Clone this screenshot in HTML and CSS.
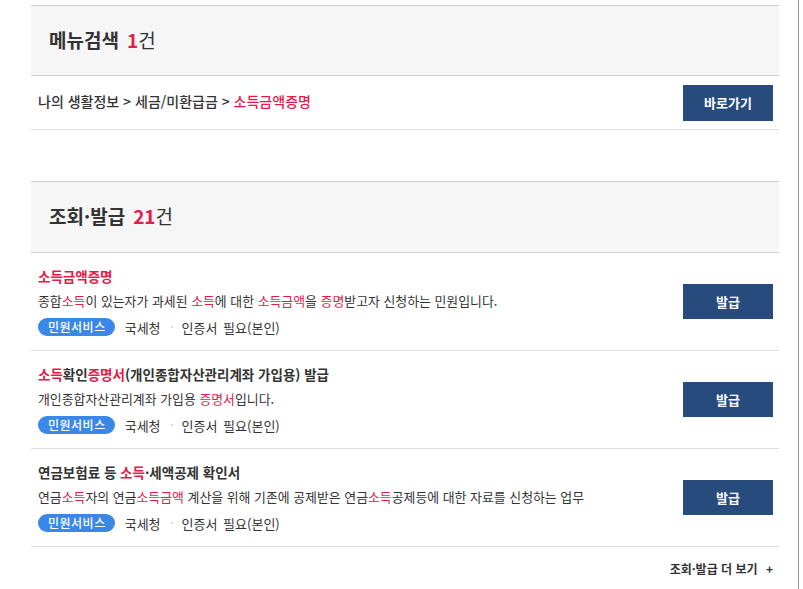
FILE: index.html
```html
<!DOCTYPE html>
<html lang="ko">
<head>
<meta charset="utf-8">
<link rel="stylesheet" href="styles.css">
</head>
<body>
<div class="frame">
  <div class="content">
    <section class="group first">
      <h2 class="group-head">메뉴검색 <span class="count">1</span><span class="unit">건</span></h2>
      <div class="crumb-row">
        <p class="crumb">나의 생활정보 &gt; 세금/미환급금 &gt; <em>소득금액증명</em></p>
        <a class="btn btn-go">바로가기</a>
      </div>
    </section>

    <section class="group second">
      <h2 class="group-head">조회·발급 <span class="count">21</span><span class="unit">건</span></h2>
      <ul class="items">
        <li class="item">
          <div class="info">
            <p class="title"><em>소득금액증명</em></p>
            <p class="desc">종합<em>소득</em>이 있는자가 과세된 <em>소득</em>에 대한 <em>소득금액</em>을 <em>증명</em>받고자 신청하는 민원입니다.</p>
            <div class="tags"><span class="badge">민원서비스</span><span class="org">국세청</span><span class="sep"></span><span class="cert">인증서 필요(본인)</span></div>
          </div>
          <a class="btn">발급</a>
        </li>
        <li class="item">
          <div class="info">
            <p class="title"><em>소득</em>확인<em>증명서</em>(개인종합자산관리계좌 가입용) 발급</p>
            <p class="desc">개인종합자산관리계좌 가입용 <em>증명서</em>입니다.</p>
            <div class="tags"><span class="badge">민원서비스</span><span class="org">국세청</span><span class="sep"></span><span class="cert">인증서 필요(본인)</span></div>
          </div>
          <a class="btn">발급</a>
        </li>
        <li class="item">
          <div class="info">
            <p class="title">연금보험료 등 <em>소득</em>·세액공제 확인서</p>
            <p class="desc">연금<em>소득</em>자의 연금<em>소득금액</em> 계산을 위해 기존에 공제받은 연금<em>소득</em>공제등에 대한 자료를 신청하는 업무</p>
            <div class="tags"><span class="badge">민원서비스</span><span class="org">국세청</span><span class="sep"></span><span class="cert">인증서 필요(본인)</span></div>
          </div>
          <a class="btn">발급</a>
        </li>
      </ul>
      <div class="more-row"><a class="more">조회·발급 더 보기 <span class="plus">+</span></a></div>
    </section>
  </div>
</div>
</body>
</html>
```

FILE: styles.css
```css
html, body {
  margin: 0;
  padding: 0;
  background: #fff;
}
body {
  font-family: "Noto Sans CJK KR", "Noto Sans", sans-serif;
  color: #333;
}
.frame {
  width: 799px;
  height: 589px;
  border-right: 1px solid #9a9a9a;
  box-sizing: border-box;
  overflow: hidden;
}
.content {
  width: 748px;
  margin-left: 31px;
  padding-top: 5px;
}
em {
  font-style: normal;
  color: #e8194b;
}
p { margin: 0; }
.group-head {
  margin: 0;
  height: 67px;
  box-sizing: content-box;
  background: #f6f6f6;
  border-top: 1px solid #cfcfcf;
  border-bottom: 1px solid #cfcfcf;
  padding: 0 0 2px 18px;
  display: flex;
  align-items: center;
  font-size: 19px;
  font-weight: 700;
  color: #333;
}
.group-head .count {
  color: #e8194b;
  margin-left: 8px;
}
.group-head .unit {
  font-weight: 400;
}
.second .group-head {
  height: 67px;
  padding-bottom: 3px;
}
.crumb-row {
  height: 53px;
  border-bottom: 1px solid #dedede;
  display: flex;
  align-items: center;
  justify-content: space-between;
  padding: 0 6px 0 7px;
}
.crumb {
  font-size: 14px;
  font-weight: 500;
  color: #333;
  padding-bottom: 3px;
}
.btn {
  width: 90px;
  height: 36px;
  background: #284b7e;
  color: #fff;
  font-size: 13px;
  font-weight: 700;
  display: flex;
  align-items: center;
  justify-content: center;
  flex: none;
}
.second {
  margin-top: 51px;
}
.items {
  list-style: none;
  margin: 0;
  padding: 0;
}
.item {
  display: flex;
  align-items: center;
  justify-content: space-between;
  padding: 12px 6px 13px 7px;
  border-bottom: 1px solid #dedede;
}
.item .btn {
  height: 35px;
}
.title {
  font-size: 13.5px;
  font-weight: 700;
  line-height: 22px;
  color: #333;
}
.desc {
  margin-top: 3px;
  font-size: 12.9px;
  line-height: 22px;
  color: #333;
}
.tags {
  margin-top: 5px;
  height: 20px;
  display: flex;
  align-items: center;
  font-size: 13px;
  color: #333;
}
.badge {
  height: 18px;
  line-height: 18px;
  padding: 0 9px 0 10px;
  border-radius: 9px;
  background: #3a87e8;
  color: #fff;
  font-size: 12px;
  letter-spacing: 0.5px;
  font-weight: 500;
}
.org {
  margin-left: 10px;
}
.sep {
  width: 2px;
  height: 2px;
  background: #d0d0d0;
  border-radius: 1px;
  margin: 0 9px 0 10px;
}
.cert {
  word-spacing: 2px;
}
.more-row {
  display: flex;
  justify-content: flex-end;
  padding: 12px 6px 0 0;
}
.more {
  font-size: 12px;
  font-weight: 700;
  color: #333;
  line-height: 20px;
}
.more .plus {
  margin-left: 5px;
}
```
